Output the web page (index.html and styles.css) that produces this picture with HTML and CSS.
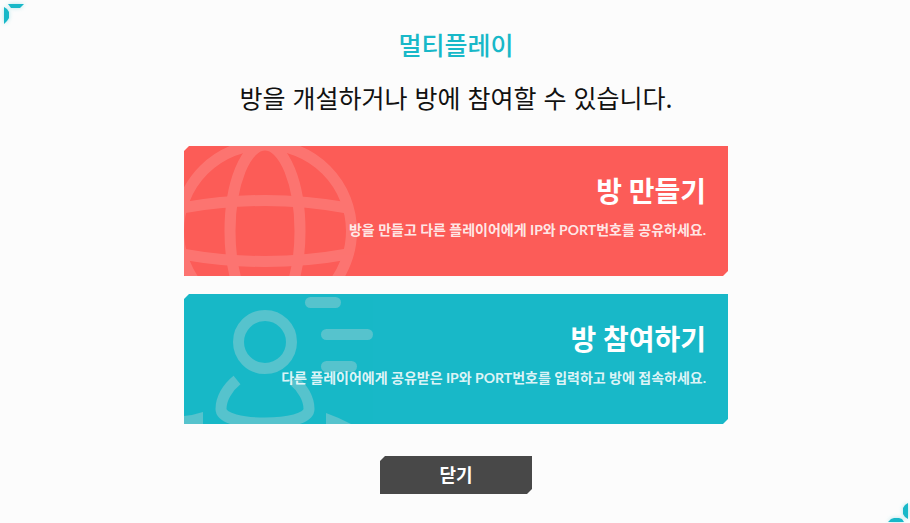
FILE: index.html
```html
<!DOCTYPE html>
<html lang="ko">
<head>
<meta charset="utf-8">
<meta name="viewport" content="width=device-width, initial-scale=1">
<title>멀티플레이</title>
<link rel="stylesheet" href="styles.css">
</head>
<body>
<svg class="corner corner-start" viewBox="0 0 32 32" aria-hidden="true">
  <path d="M8 4H24L20 8H11ZM4 7L7 9L9 12V18L7 21L4 24Z"/>
</svg>
<main class="dialog">
  <h1 class="title">멀티플레이</h1>
  <p class="lead">방을 개설하거나 방에 참여할 수 있습니다.</p>
  <div class="choices">
    <button type="button" class="card card-create">
      <svg class="art" viewBox="0 0 200 130" aria-hidden="true">
        <g class="art-group lines">
          <circle cx="81" cy="85" r="86.5"/>
          <ellipse cx="81" cy="85" rx="35" ry="86"/>
          <path d="M-2 62Q81 47 164 62M-2 108Q81 123 164 108"/>
        </g>
      </svg>
      <span class="card-title">방 만들기</span>
      <span class="card-text">방을 만들고 다른 플레이어에게 IP와 PORT번호를 공유하세요.</span>
    </button>
    <button type="button" class="card card-join">
      <svg class="art" viewBox="0 0 200 130" aria-hidden="true">
        <g class="art-group">
          <g class="lines">
            <circle cx="81" cy="48" r="26.5"/>
            <path d="M53 86C43 94 37 105 37 115C37 125 60 129 81 129C102 129 125 125 125 115C125 105 119 94 109 86"/>
          </g>
          <rect x="121" y="3" width="36" height="11" rx="5.5"/>
          <rect x="137" y="35" width="52" height="11" rx="5.5"/>
          <rect x="137" y="67" width="36" height="11" rx="5.5"/>
          <path d="M0 122Q10 121 19 118V130H0ZM142 119Q156 124 167 130H142Z"/>
        </g>
      </svg>
      <span class="card-title">방 참여하기</span>
      <span class="card-text">다른 플레이어에게 공유받은 IP와 PORT번호를 입력하고 방에 접속하세요.</span>
    </button>
  </div>
  <button type="button" class="close">닫기</button>
</main>
<svg class="corner corner-end" viewBox="0 0 32 32" aria-hidden="true">
  <path d="M32 13L29 15L27 18V24L29 27L32 29ZM12 32L15 29L18 28H23L26 29L28 32Z"/>
</svg>
</body>
</html>
```
FILE: styles.css
```css
* {
  box-sizing: border-box;
}

body {
  margin: 0;
  min-height: 100vh;
  background: #fcfcfc;
  color: #111;
  font-family: Lato, "Noto Sans CJK KR", sans-serif;
}

.dialog {
  display: flex;
  flex-direction: column;
  align-items: center;
  padding: 25px 16px 0 18px;
}

.title,
.lead {
  margin: 0;
  font-family: "Noto Sans CJK KR", sans-serif;
  font-size: 25px;
  line-height: 38px;
  text-align: center;
}

.title {
  color: #18b8c8;
  font-weight: 500;
}

.lead {
  margin-top: 15px;
  font-weight: 400;
}

.choices {
  display: grid;
  gap: 18px;
  width: 100%;
  max-width: 544px;
  margin: 30px 0 32px;
}

.card,
.close {
  border: 0;
  color: #fff;
  font-family: inherit;
  cursor: pointer;
  clip-path: polygon(5px 0, 100% 0, 100% calc(100% - 5px), calc(100% - 5px) 100%, 0 100%, 0 5px);
}

.card {
  position: relative;
  display: flex;
  flex-direction: column;
  align-items: flex-end;
  min-height: 130px;
  padding: 24px 22px;
  text-align: right;
}

.card-create {
  background: #fc5c58;
}

.card-join {
  background: #18b8c8;
}

.card-title {
  position: relative;
  font-size: 28px;
  font-weight: 700;
  line-height: 42px;
}

.card-text {
  position: relative;
  margin-top: 8px;
  color: rgba(255, 255, 255, 0.87);
  font-size: 14px;
  font-weight: 700;
  line-height: 20px;
}

.art {
  position: absolute;
  top: 0;
  left: 0;
  width: 200px;
  height: 130px;
}

.art-group {
  fill: #fff;
  opacity: 0.15;
}

.card-join .art-group {
  fill: #d8d8d8;
  opacity: 0.32;
}

.lines {
  fill: none;
  stroke: #fff;
  stroke-width: 11px;
}

.card-create .art-group {
  fill: none;
}

.card-join .lines {
  fill: none;
  stroke: #d8d8d8;
}

.close {
  width: 152px;
  min-height: 38px;
  padding: 0;
  background: #484848;
  font-size: 18px;
  font-weight: 700;
  line-height: 26px;
}

.corner {
  position: fixed;
  width: 32px;
  height: 32px;
  fill: #18b8c8;
  filter: drop-shadow(0 0 2px rgba(24, 184, 200, 0.35));
}

.corner-start {
  top: 0;
  left: 0;
}

.corner-end {
  right: 2px;
  bottom: 1px;
}
```
